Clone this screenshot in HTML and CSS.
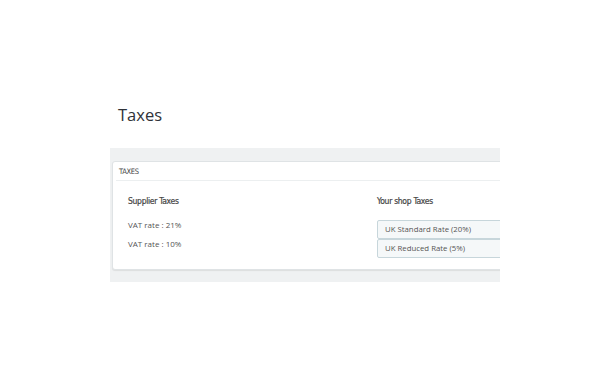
FILE: index.html
```html
<!DOCTYPE html>
<html>
  <head>
    <title>Taxes</title>
    <meta name="viewport" content="width=device-width, initial-scale=1" />
    <link rel="stylesheet" href="styles.css">
  </head>

  <body>
    <main>
      <h1>Taxes</h1>

      <div class="band">
        <div class="panel">
          <div class="panel-heading">Taxes</div>

          <div class="panel-body">
            <div class="col supplier">
              <h2>Supplier Taxes</h2>
              <p>VAT rate : 21%</p>
              <p>VAT rate : 10%</p>
            </div>

            <div class="col shop">
              <h2>Your shop Taxes</h2>
              <div class="rates">
                <div class="rate">UK Standard Rate (20%)</div>
                <div class="rate">UK Reduced Rate (5%)</div>
              </div>
            </div>
          </div>
        </div>
      </div>
    </main>
  </body>
</html>
```

FILE: styles.css
```css
body {
  margin: 0;
  font-family: "Open Sans", "Liberation Sans", sans-serif;
  color: #555;
  background: #fff;
}

main {
  padding-top: 104px;
  padding-left: 110px;
}

h1 {
  margin: 0 0 22px 8px;
  font-size: 16.5px;
  font-weight: 400;
  line-height: 22px;
  color: #2f3238;
}

.band {
  width: 390px;
  height: 134px;
  overflow: hidden;
  background: #eff1f2;
  padding: 13px 0 0 2px;
  box-sizing: border-box;
}

.panel {
  width: 420px;
  height: 109px;
  background: #fff;
  border: 1px solid #dfe3e5;
  border-radius: 3px;
  box-shadow: 0 1px 1px rgba(0, 0, 0, 0.08);
  box-sizing: border-box;
  padding: 0 3px;
}

.panel-heading {
  font-family: "DejaVu Sans Condensed", "DejaVu Sans", sans-serif;
  text-transform: uppercase;
  font-size: 7.5px;
  letter-spacing: -0.3px;
  line-height: 17px;
  padding: 1px 0 0 3px;
  color: #444;
  border-bottom: 1px solid #eceff0;
}

.panel-body {
  display: flex;
  padding: 13px 0 0 12px;
}

.col {
  display: flex;
  flex-direction: column;
}

.supplier {
  width: 249px;
}

.shop {
  flex: 1;
}

h2 {
  margin: 0 0 10px;
  font-family: "DejaVu Sans Condensed", "DejaVu Sans", sans-serif;
  font-size: 8.5px;
  letter-spacing: -0.3px;
  font-weight: 400;
  line-height: 14px;
  color: #444;
  -webkit-text-stroke: 0.2px #444;
}

p {
  margin: 0 0 5px;
  font-size: 8px;
  line-height: 14px;
  color: #555;
}

.rates {
  margin-top: 2px;
}

.rate {
  height: 19px;
  line-height: 17px;
  padding-left: 7px;
  font-size: 7.8px;
  color: #555;
  background: #f5f8f9;
  border: 1px solid #c7d6db;
  border-radius: 2px;
  box-sizing: border-box;
}
```
